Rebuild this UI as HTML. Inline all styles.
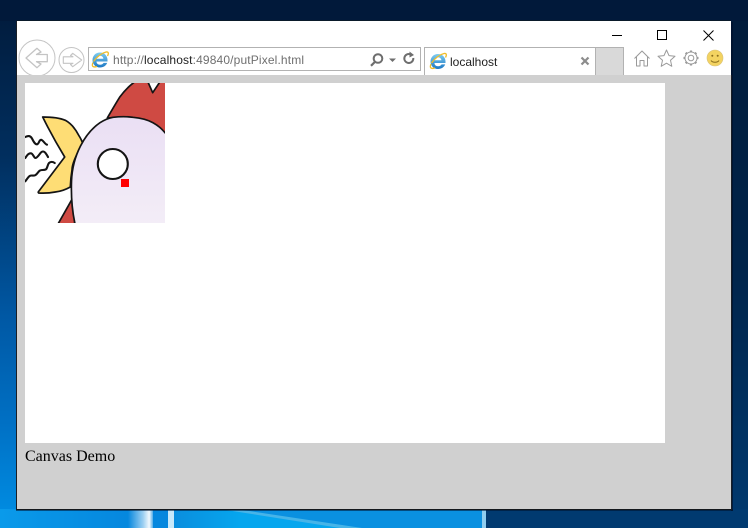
<!DOCTYPE html>
<html lang="en">
<head>
<meta charset="utf-8">
<title>localhost</title>
<style>
html,body{margin:0;padding:0;width:748px;height:528px;overflow:hidden;background:#012040}
#stage{position:absolute;left:0;top:0}
.t{position:absolute;white-space:nowrap;line-height:1}
.ui{font-family:"Liberation Sans",sans-serif;font-size:12px}
</style>
</head>
<body>
<svg id="stage" width="748" height="528" viewBox="0 0 748 528" xmlns="http://www.w3.org/2000/svg">
<defs>
<linearGradient id="bg" x1="0" y1="0" x2="0" y2="1">
<stop offset="0" stop-color="#011a3a"/><stop offset=".3" stop-color="#012f5f"/><stop offset=".6" stop-color="#0058a4"/><stop offset=".8" stop-color="#0070c4"/><stop offset="1" stop-color="#0090e6"/>
</linearGradient>
<linearGradient id="bgr" x1="0" y1="0" x2="0" y2="1">
<stop offset="0" stop-color="#011b3a"/><stop offset=".5" stop-color="#01244a"/><stop offset="1" stop-color="#013a70"/>
</linearGradient>
<linearGradient id="strip" x1="0" y1="0" x2="1" y2="0">
<stop offset="0" stop-color="#0a9aea"/><stop offset=".27" stop-color="#0587de"/><stop offset=".6" stop-color="#0588dc"/><stop offset="1" stop-color="#0a7fd4"/>
</linearGradient>
<linearGradient id="glow" gradientUnits="userSpaceOnUse" x1="174" y1="0" x2="240" y2="0">
<stop offset="0" stop-color="#0a8ede"/><stop offset="1" stop-color="#06a6ee"/>
</linearGradient>
<linearGradient id="beam" x1="0" y1="0" x2="1" y2="0">
<stop offset="0" stop-color="#fff" stop-opacity="0"/><stop offset=".6" stop-color="#fff" stop-opacity=".6"/><stop offset=".85" stop-color="#fff" stop-opacity=".95"/><stop offset="1" stop-color="#fff" stop-opacity=".3"/>
</linearGradient>
<linearGradient id="head" x1="0" y1="0" x2="0" y2="1">
<stop offset="0" stop-color="#eadff4"/><stop offset="1" stop-color="#f3edf7"/>
</linearGradient>
<linearGradient id="ie" x1="0" y1="0" x2="0" y2="1">
<stop offset="0" stop-color="#7fcdf0"/><stop offset="1" stop-color="#1c78c4"/>
</linearGradient>
<clipPath id="img"><rect x="25" y="83" width="140" height="140"/></clipPath>
<clipPath id="toolbar"><rect x="17" y="21" width="714" height="54"/></clipPath>
<g id="ieicon">
<path d="M7.500 2H-3.500C-3.500 4 -2 5.200 0 5.200C1.600 5.200 3 4.600 3.600 3.400H7.200C6.200 6.200 3.400 8 0 8C-4.500 8 -7.500 4.600 -7.500 .5C-7.500 -3.600 -4.500 -7 0 -7C4.500 -7 7.500 -3.600 7.500 .5ZM-3.400 -.8H3.400C3.200 -2.600 1.800 -3.600 0 -3.600C-1.800 -3.600 -3.200 -2.600 -3.400 -.8Z" fill="url(#ie)" fill-rule="evenodd"/>
<path d="M-6.500 2C-3 -3 2 -6.500 6 -7.500C8.500 -8 9 -6 7.500 -3.500" fill="none" stroke="#f0bd2a" stroke-width="1.300"/>
<path d="M-7 3C-8.500 6.500 -7.500 8.300 -3 7" fill="none" stroke="#f0bd2a" stroke-width="1.300"/>
</g>
</defs>

<!-- desktop -->
<rect width="748" height="528" fill="url(#bgr)"/>
<rect x="0" y="0" width="17" height="528" fill="url(#bg)"/>
<rect x="0" y="0" width="748" height="21" fill="#01193a"/>
<rect x="0" y="509" width="484" height="19" fill="url(#strip)"/>
<path d="M205 509L345 528H484V509Z" fill="#0a90e0"/>
<path d="M174 528H358L222 509H174Z" fill="url(#glow)"/>
<path d="M220 509L340 528H362L236 509Z" fill="#46b4e8"/>
<rect x="128" y="509" width="25" height="19" fill="url(#beam)"/>
<rect x="168" y="509" width="6" height="19" fill="#c8e9fa"/>
<rect x="482" y="509" width="4" height="19" fill="#8fcdef"/>
<rect x="486" y="509" width="262" height="19" fill="#013a70"/>

<!-- window shadow + body -->
<rect x="731" y="22" width="2" height="489" fill="#00102a" opacity=".65"/>
<rect x="16" y="509" width="717" height="2" fill="#00102a" opacity=".55"/>
<rect x="17" y="20" width="714" height="1" fill="#0a1a2a"/>
<rect x="17" y="21" width="714" height="54" fill="#fff"/>
<rect x="17" y="75" width="714" height="434" fill="#d0d0d0"/>
<rect x="16" y="21" width="1" height="489" fill="#1a1f26"/>
<rect x="16" y="509" width="716" height="1" fill="#15181c"/>
<rect x="731" y="75" width="1" height="435" fill="#1a1f26"/>

<!-- window controls -->
<rect x="612" y="35" width="10" height="1" fill="#000"/>
<rect x="657.500" y="30.500" width="9" height="9" fill="none" stroke="#000"/>
<path d="M703.500 30.500L713.500 40.500M713.500 30.500L703.500 40.500" stroke="#000" stroke-width="1" fill="none"/>

<!-- nav buttons -->
<g clip-path="url(#toolbar)" fill="none" stroke="#c4c4c4" stroke-width="1">
<circle cx="37" cy="58" r="18" fill="#fff"/>
<path d="M26 58L37 48.300L41 52L36.500 54.500H47.300V61.700H36.500L41 64L37 67.700Z" stroke-width="1.300" stroke-linejoin="round"/>
<circle cx="71.500" cy="60" r="12.500" fill="#fff"/>
<path d="M81.700 60L72.700 53.300L70.500 55.500L73 56.800H63.300V63.300H73L70.500 64.500L72.700 66.700Z" stroke-width="1.100" stroke-linejoin="round"/>
</g>

<!-- address bar -->
<rect x="88.500" y="47.500" width="332" height="23" fill="#fff" stroke="#b2b2b2"/>
<use href="#ieicon" x="100" y="59.500"/>
<g fill="none" stroke="#6e6e6e">
<circle cx="378" cy="58.500" r="4.300" stroke-width="2"/>
<path d="M374.800 62L371 65.800" stroke-width="2.200"/>
<path d="M413.300 58A4.500 4.500 0 1 1 410.500 54.300" stroke-width="2"/>
</g>
<path d="M389 58.500H396L392.500 62Z" fill="#6e6e6e"/>
<path d="M409.500 51.500L414 55L409.500 57.500Z" fill="#6e6e6e"/>

<!-- tab -->
<path d="M424.500 75V47.500H595.500V75" fill="#fff" stroke="#b2b2b2"/>
<rect x="596" y="47.500" width="27" height="27.500" fill="#d9d9d9"/>
<path d="M596 47.500H623.500V75" fill="none" stroke="#b2b2b2"/>
<use href="#ieicon" x="438" y="61"/>
<path d="M581.500 57.500L588.500 64.500M588.500 57.500L581.500 64.500" stroke="#8c8c8c" stroke-width="2.200" fill="none"/>

<!-- toolbar icons -->
<g fill="none" stroke="#9a9a9a" stroke-width="1">
<path d="M634.500 58.500L642 51L649.500 58.500M636.500 57V66H640V60.500H644V66H647.500V57" stroke-linejoin="round"/>
<path d="M666.500 50L669 55.600L675 56.200L670.500 60.300L671.800 66.300L666.500 63.200L661.200 66.300L662.500 60.300L658 56.200L664 55.600Z" stroke-linejoin="round"/>
<circle cx="691" cy="58" r="2.800"/>
<circle cx="691" cy="58" r="6"/>
<path d="M691 50.500V52M691 64V65.500M683.500 58H685M697 58H698.500M685.700 52.700L686.800 53.800M695.200 62.200L696.300 63.300M685.700 63.300L686.800 62.200M695.200 53.800L696.300 52.700" stroke-width="2.200"/>
</g>
<circle cx="715" cy="58" r="8" fill="#f3d361" stroke="#d8c17a" stroke-width=".6"/>
<circle cx="712.300" cy="55.800" r="1" fill="#8a6d1c"/>
<circle cx="717.700" cy="55.800" r="1" fill="#8a6d1c"/>
<path d="M711 60.500C712.500 62.800 717.500 62.800 719 60.500" fill="none" stroke="#8a6d1c" stroke-width="1"/>

<!-- canvas -->
<rect x="25" y="83" width="640" height="360" fill="#fff"/>
<g clip-path="url(#img)" stroke="#141414" stroke-width="1.700" stroke-linejoin="round" stroke-linecap="round">
<path d="M107.300 118C112 110 116 103 120 96.700C125 90 130 85 136 81H147.500L152.700 92.700L160.500 81H168V136L152 124L128 117Z" fill="#cf4a43"/>
<path d="M58 224L72 199.300C75.500 206 76 214 74.500 224Z" fill="#cf4a43"/>
<path d="M42.700 117C52 117 60 118 65.300 120.300C72 124 76 130 78.700 135.300C80.500 138 82 141 82.700 143.700C76 155 72 164 72 170C71 176 70.500 182 70.300 187C65 190 60 191.500 55.300 192C50 193 44 193.300 38.700 193C38 192.500 38 192 39 191L64.700 157C58 146 52 136 42.700 117Z" fill="#fedd75"/>
<path d="M75 224C72 210 71 195 71.500 181C72.500 155 85 133 100 122.700C105 119.500 109 118 113 117.300C120 116.500 127 116.500 133 117.300C141 118 148 120 153 122.700C159 126 162 129 167 135V224Z" fill="url(#head)"/>
<circle cx="112.800" cy="164" r="15" fill="#fff" stroke-width="2.100"/>
<g fill="none" stroke-width="2.100">
<path d="M25.300 137C28 135.500 30.500 135.500 32 138.500C33.500 141.500 35 144.500 37 144.300C39 144 39 140 41 139.800C43 139.700 45 144.500 47 144.700"/>
<path d="M25.300 158C27 155 29 153 31 153.300C33 153.500 34 158 35.500 158C37 158 39 155 40.500 153C42 151 44 151 45.500 153C47 155 47.500 156 48 157"/>
<path d="M25.300 181.300C27 179 28.500 176.500 30 175.800C31.500 175 33.500 176 35 175.300C37 174.500 38 172 39.500 170.800C41 169.500 44 170.500 46 169.300C47.500 168 47.500 164.500 49 163C50.500 161.500 53 161.500 54.700 163"/>
</g>
</g>
<rect x="121" y="179" width="8" height="8" fill="#f00"/>
</svg>

<div class="t ui" style="left:113px;top:54px;color:#6f6f6f;letter-spacing:.14px">http://<span style="color:#222">localhost</span>:49840/putPixel.html</div>
<div class="t ui" style="left:450px;top:56px;color:#222">localhost</div>
<div class="t" style="left:25px;top:449px;font-family:'Liberation Serif',serif;font-size:16px;color:#000">Canvas Demo</div>
</body>
</html>
